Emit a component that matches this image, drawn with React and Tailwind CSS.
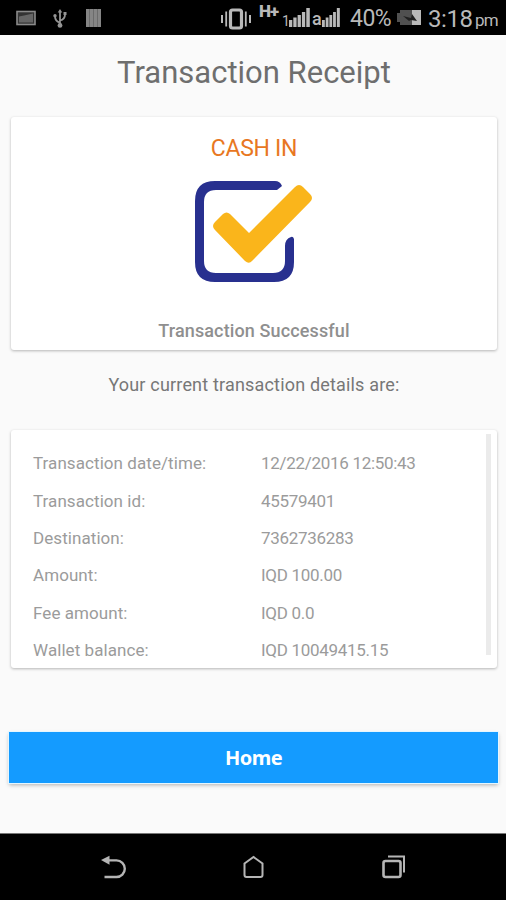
const details = [
  ["Transaction date/time:", "12/22/2016 12:50:43"],
  ["Transaction id:", "45579401"],
  ["Destination:", "7362736283"],
  ["Amount:", "IQD 100.00"],
  ["Fee amount:", "IQD 0.0"],
  ["Wallet balance:", "IQD 10049415.15"],
];

function SignalBars({ className }) {
  return (
    <svg className={className} width="21" height="20" viewBox="0 0 21 20" preserveAspectRatio="none" fill="#b9b9b9">
      <rect x="0" y="12" width="3.300" height="7" />
      <rect x="4.300" y="9.500" width="3.300" height="9.500" />
      <rect x="8.600" y="7" width="3.300" height="12" />
      <rect x="12.900" y="4" width="3.300" height="15" />
      <rect x="17.300" y="0" width="3.500" height="19" />
    </svg>
  );
}

function StatusBar() {
  return (
    <header className="flex h-[35px] shrink-0 items-start overflow-hidden bg-black text-[#b9b9b9]">
      <svg className="ml-4 mt-[10px] shrink-0" width="20" height="16" viewBox="0 0 20 16">
        <rect x="1" y="1.500" width="18" height="13" fill="#333" stroke="#8a8a8a" strokeWidth="1.600" />
        <path d="M3 6.500 8 5.500l9-2v9H3z" fill="#666" />
      </svg>
      <svg className="ml-[17px] mt-[9px] shrink-0" width="14" height="19" viewBox="0 0 14 19" fill="none" stroke="#949494" strokeWidth="1.800">
        <path d="M7 16V2M7 13.500C2.500 12.500 2 10 2 7M7 11.500c4-1 5-3 5-6" />
        <path d="M7 0 4.700 3.500h4.600zM10.500 3h3v3h-3z" fill="#949494" stroke="none" />
        <circle cx="2" cy="6.800" r="1.700" fill="#949494" stroke="none" />
        <circle cx="7" cy="16.400" r="2.400" fill="#949494" stroke="none" />
      </svg>
      <svg className="ml-[19px] mt-[9px] shrink-0" width="15" height="18" viewBox="0 0 15 18">
        <rect width="15" height="18" fill="#858585" />
        <path d="M3.500 0v18M7.500 0v18M11.500 0v18" stroke="#6b6b6b" strokeWidth="1" />
      </svg>
      <svg className="ml-[119px] mt-2 shrink-0" width="32" height="22" viewBox="0 0 32 22" fill="none" stroke="#b9b9b9">
        <rect x="10.500" y="2" width="11" height="18" rx="2" strokeWidth="3.200" />
        <path d="M6.200 3.500v15M25.800 3.500v15" strokeWidth="1.800" />
        <path d="M2 7v8M30 7v8" strokeWidth="2" />
      </svg>
      <span className="ml-[7px] mt-[3px] w-[23px] shrink-0 whitespace-nowrap text-[17px] font-black leading-[16px] tracking-[-1px]">H+</span>
      <span className="mt-[14px] w-[7px] shrink-0 text-[14px] leading-[14px] tracking-[-1px]">1</span>
      <SignalBars className="mt-2 shrink-0" />
      <span className="ml-[2px] mt-[10px] w-[10px] shrink-0 text-[18px] font-medium leading-[18px]">a</span>
      <SignalBars className="mt-2 w-[18px] shrink-0" />
      <span className="ml-[10px] mt-[6px] w-[42px] shrink-0 whitespace-nowrap text-[23px] leading-[26px] tracking-[-0.5px]">40%</span>
      <svg className="ml-[5px] mt-[9px] shrink-0" width="25" height="17" viewBox="0 0 25 17">
        <path d="M3 4V1h12v15H3v-3H0V4z" fill="#505050" />
        <path d="M15 1h9v15h-9z" fill="#b9b9b9" />
        <path d="m6 7 8 2 1-4 5 7-6-1-2 1z" fill="#202020" />
      </svg>
      <span className="ml-[6px] mt-[6px] w-[47px] shrink-0 whitespace-nowrap text-[24px] leading-[26px] tracking-[-0.4px]">3:18</span>
      <span className="mt-[10px] shrink-0 text-[17px] leading-[20px] tracking-[-0.8px]">pm</span>
    </header>
  );
}

function SuccessIcon() {
  return (
    <svg className="mt-[18px]" width="118" height="102" viewBox="0 0 118 102">
      <path d="M80 0H20Q0 0 0 20V81Q0 101 20 101H79Q99 101 99 81V58Q98 55 96 56 90 58 90 65V80Q90 92 78 92H21Q9 92 9 80V21Q9 9 21 9H82L87 5Q85 0 80 0Z" fill="#28308f" />
      <path d="M20 41 28 33Q31.500 30 35 33L54 52 100 6Q104 2 108 6L115 13Q119 17 115 21L57 80Q54 83.500 50 80L20 49Q16 45 20 41Z" fill="#fab51b" />
    </svg>
  );
}

export default function App() {
  return (
    <div className="flex h-[900px] w-full flex-col overflow-hidden bg-[#fafafa] font-['Roboto',sans-serif]">
      <StatusBar />
      <main className="flex flex-1 flex-col pl-[11px] pr-[9px]">
        <h1 className="mt-[18px] text-center text-[31px] leading-[40px] text-[#6e6e6e]">Transaction Receipt</h1>
        <section className="mt-[24px] flex h-[233px] flex-col items-center rounded-[3px] bg-white shadow-[0_1px_3px_rgba(0,0,0,0.28)]">
          <h2 className="mt-[18px] text-[23px] leading-[28px] tracking-[-0.3px] text-[#e87722]">CASH IN</h2>
          <SuccessIcon />
          <p className="mt-[36px] text-[18px] font-medium leading-[24px] tracking-[0.13px] text-[#8f8f8f]">Transaction Successful</p>
        </section>
        <p className="mt-[23px] text-center text-[18px] leading-[24px] tracking-[0.18px] text-[#777]">Your current transaction details are:</p>
        <section className="mt-[33px] flex h-[238px] justify-between rounded-[3px] bg-white pl-[22px] pr-[6px] shadow-[0_1px_3px_rgba(0,0,0,0.28)]">
          <dl className="mt-[15.500px] text-[17px] text-[#9b9b9b]">
            {details.map(([label, value]) => (
              <div key={label} className="flex h-[37.300px] items-center">
                <dt className="w-[228px] tracking-[0.07px]">{label}</dt>
                <dd className="tracking-[-0.3px]">{value}</dd>
              </div>
            ))}
          </dl>
          <div className="mt-1 h-[221px] w-[5px] bg-[#ebebeb]" />
        </section>
        <button className="-ml-[2px] -mr-px mt-[64px] h-[51px] bg-[#149bff] font-['Noto_Sans',sans-serif] text-[20px] font-bold tracking-[-0.5px] text-white shadow-[0_0_0_1px_#e4f6ff,0_2px_4px_rgba(0,0,0,0.3)]">Home</button>
      </main>
      <nav className="flex h-[67px] shrink-0 items-start border-t border-[#777] bg-black">
        <svg className="ml-[101px] mt-[21px]" width="25" height="24" viewBox="0 0 25 24">
          <path d="M3.500 22H15.500A8.300 8.300 0 0 0 15.500 5.400H7" fill="none" stroke="#b5b5b5" strokeWidth="2.400" />
          <path d="M0 5 8.500.7v9z" fill="#b5b5b5" />
        </svg>
        <svg className="ml-[117px] mt-[21px]" width="21" height="24" viewBox="0 0 21 24" fill="none" stroke="#b5b5b5" strokeWidth="2">
          <path d="M1.500 8.500 10.500 2l9 6.500V20a2 2 0 0 1-2 2h-14a2 2 0 0 1-2-2z" />
        </svg>
        <svg className="ml-[118px] mt-[21px]" width="24" height="24" viewBox="0 0 24 24" fill="none" stroke="#b5b5b5">
          <rect x="1.500" y="6" width="17" height="16" rx="2" strokeWidth="2.600" />
          <path d="M6 1.500h16v16" strokeWidth="2" />
        </svg>
      </nav>
    </div>
  );
}
